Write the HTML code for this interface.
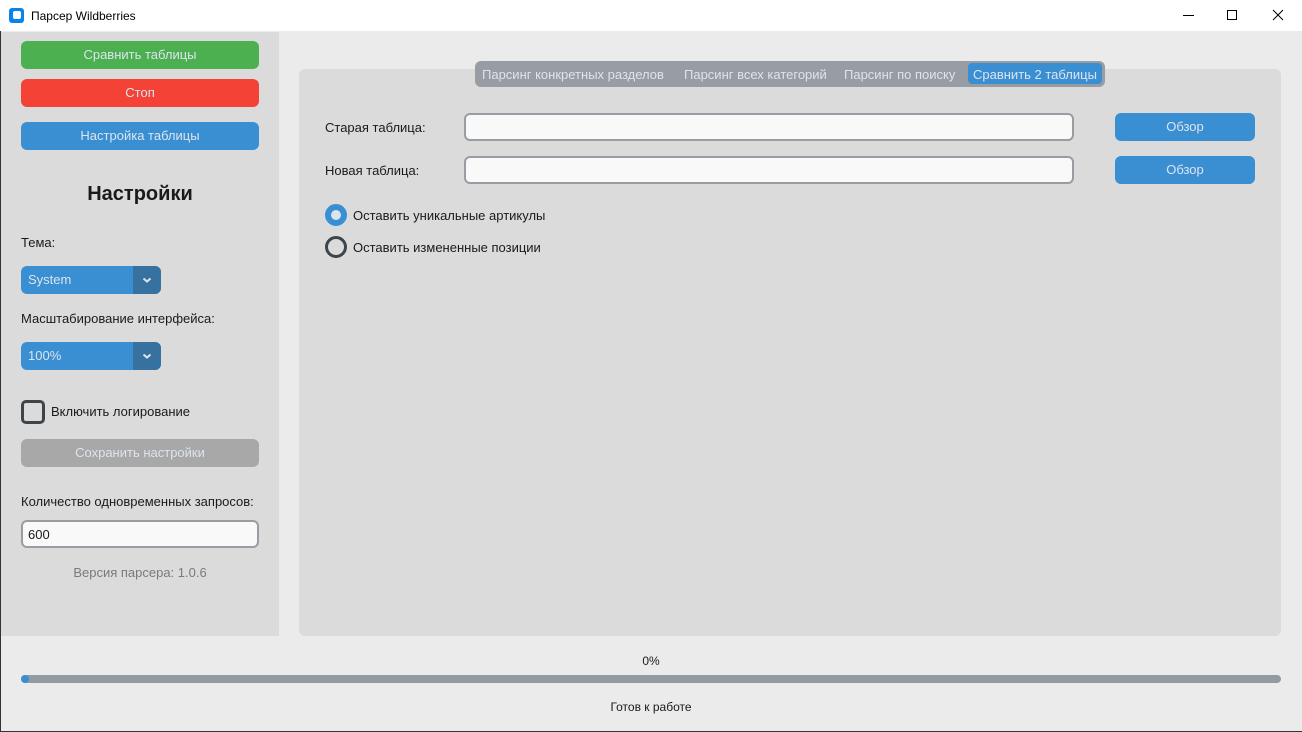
<!DOCTYPE html>
<html><head><meta charset="utf-8"><style>
*{margin:0;padding:0;box-sizing:border-box}
body{width:1302px;height:732px;overflow:hidden;background:#ebebeb;font-family:"Liberation Sans","Noto Sans CJK SC",sans-serif;font-size:13px;color:#1a1a1a;position:relative}
.a{position:absolute}
.btn{position:absolute;border-radius:6px;color:#dce4ee;text-align:center;font-size:13px}
.t{position:absolute;white-space:nowrap}
.inp{position:absolute;background:#f9f9fa;border:2px solid #979da2;border-radius:6px}
</style></head><body>
<div class="a" style="left:0;top:0;width:1302px;height:31px;background:#fff"></div>
<div class="a" style="left:9px;top:8px;width:15px;height:15px;background:#0a84e8;border-radius:3px"></div>
<div class="a" style="left:13px;top:11px;width:8px;height:8px;background:#fff;border-radius:2px"></div>
<div class="t" style="left:31px;top:9px;font-size:12px;color:#000">Парсер Wildberries</div>
<div class="a" style="left:1183px;top:15px;width:11px;height:1px;background:#000"></div>
<div class="a" style="left:1227px;top:10px;width:10px;height:10px;border:1px solid #000"></div>
<svg class="a" style="left:1272px;top:9px" width="12" height="12"><path d="M1 1L11 11M11 1L1 11" stroke="#000" stroke-width="1"/></svg>
<div class="a" style="left:0;top:31px;width:1px;height:701px;background:#333"></div>
<div class="a" style="left:0;top:731px;width:1302px;height:1px;background:#333"></div>
<div class="a" style="left:1px;top:32px;width:278px;height:604px;background:#dbdbdb"></div>

<div class="btn" style="left:21px;top:41px;width:238px;height:28px;line-height:28px;background:#4caf50">Сравнить таблицы</div>
<div class="btn" style="left:21px;top:79px;width:238px;height:28px;line-height:28px;background:#f44336">Стоп</div>
<div class="btn" style="left:21px;top:122px;width:238px;height:28px;line-height:28px;background:#3a8fd3">Настройка таблицы</div>
<div class="t" style="left:0;width:280px;text-align:center;top:183px;font-size:20px;font-weight:bold">Настройки</div>
<div class="t" style="left:21px;top:235px">Тема:</div>
<div class="btn" style="left:21px;top:266px;width:140px;height:28px;line-height:28px;background:#3a8fd3;text-align:left;padding-left:7px">System</div>
<div class="a" style="left:133px;top:266px;width:28px;height:28px;background:#36719f;border-radius:0 6px 6px 0"></div>
<svg class="a" style="left:142px;top:277px" width="10" height="6"><path d="M1.5 1.5L5 4.5L8.5 1.5" stroke="#dce4ee" stroke-width="2" fill="none"/></svg>
<div class="t" style="left:21px;top:311px">Масштабирование интерфейса:</div>
<div class="btn" style="left:21px;top:342px;width:140px;height:28px;line-height:28px;background:#3a8fd3;text-align:left;padding-left:7px">100%</div>
<div class="a" style="left:133px;top:342px;width:28px;height:28px;background:#36719f;border-radius:0 6px 6px 0"></div>
<svg class="a" style="left:142px;top:353px" width="10" height="6"><path d="M1.5 1.5L5 4.5L8.5 1.5" stroke="#dce4ee" stroke-width="2" fill="none"/></svg>
<div class="a" style="left:21px;top:400px;width:24px;height:24px;border:3px solid #3e454a;border-radius:5px"></div>
<div class="t" style="left:51px;top:404px">Включить логирование</div>
<div class="btn" style="left:21px;top:439px;width:238px;height:28px;line-height:28px;background:#a8a8a8;color:#dce4ee">Сохранить настройки</div>
<div class="t" style="left:21px;top:494px">Количество одновременных запросов:</div>
<div class="inp" style="left:21px;top:520px;width:238px;height:28px"></div>
<div class="t" style="left:28px;top:527px">600</div>
<div class="t" style="left:0;width:280px;text-align:center;top:565px;color:#7a7a7a">Версия парсера: 1.0.6</div>

<div class="a" style="left:299px;top:69px;width:982px;height:567px;background:#dbdbdb;border-radius:6px"></div>
<div class="a" style="left:475px;top:61px;width:630px;height:26px;background:#979da2;border-radius:6px"></div>
<div class="t" style="left:482px;top:67px;color:#dce4ee">Парсинг конкретных разделов</div>
<div class="t" style="left:684px;top:67px;color:#dce4ee">Парсинг всех категорий</div>
<div class="t" style="left:844px;top:67px;color:#dce4ee">Парсинг по поиску</div>
<div class="a" style="left:968px;top:63px;width:134px;height:21px;background:#3a8fd3;border-radius:4px"></div>
<div class="t" style="left:973px;top:67px;color:#dce4ee">Сравнить 2 таблицы</div>

<div class="t" style="left:325px;top:120px">Старая таблица:</div>
<div class="inp" style="left:464px;top:113px;width:610px;height:28px"></div>
<div class="btn" style="left:1115px;top:113px;width:140px;height:28px;line-height:28px;background:#3a8fd3">Обзор</div>
<div class="t" style="left:325px;top:163px">Новая таблица:</div>
<div class="inp" style="left:464px;top:156px;width:610px;height:28px"></div>
<div class="btn" style="left:1115px;top:156px;width:140px;height:28px;line-height:28px;background:#3a8fd3">Обзор</div>
<div class="a" style="left:325px;top:204px;width:22px;height:22px;border:6px solid #3a8fd3;border-radius:50%;background:#dce4ee"></div>
<div class="t" style="left:353px;top:208px">Оставить уникальные артикулы</div>
<div class="a" style="left:325px;top:236px;width:22px;height:22px;border:3px solid #3e454a;border-radius:50%"></div>
<div class="t" style="left:353px;top:240px">Оставить измененные позиции</div>

<div class="t" style="left:0;width:1302px;text-align:center;top:654px;font-size:12px">0%</div>
<div class="a" style="left:21px;top:675px;width:1260px;height:8px;background:#939ba2;border-radius:4px"></div>
<div class="a" style="left:21px;top:675px;width:8px;height:8px;background:#3a8fd3;border-radius:4px"></div>
<div class="t" style="left:0;width:1302px;text-align:center;top:700px;font-size:12px">Готов к работе</div>
</body></html>
